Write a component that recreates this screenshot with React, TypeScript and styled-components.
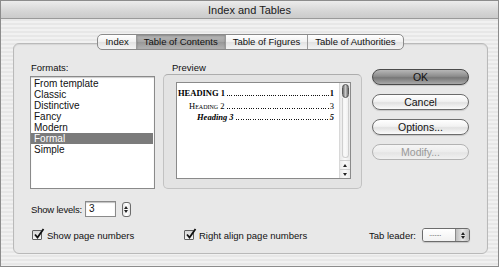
import React from 'react';
import styled, { createGlobalStyle, css } from 'styled-components';

const GlobalStyle = createGlobalStyle`
  html, body { margin: 0; padding: 0; background: #fff; }
  body {
    font-family: "Liberation Sans", Arial, sans-serif;
    font-size: 9.5px;
    color: #111;
  }
`;

const pinstripe = css`
  background: repeating-linear-gradient(
    to bottom,
    #f1f1f1 0px,
    #f1f1f1 2px,
    #e7e7e7 2px,
    #e7e7e7 4px
  );
`;

const Window = styled.div`
  width: 499px;
  height: 267px;
  box-sizing: border-box;
  border: 1px solid #8c8c8c;
  display: flex;
  flex-direction: column;
  ${pinstripe}
`;

const TitleBar = styled.div`
  height: 17px;
  flex: none;
  display: flex;
  align-items: center;
  justify-content: center;
  font-size: 11px;
  color: #1a1a1a;
  background: linear-gradient(to bottom, #ececec, #d6d6d6 60%, #cbcbcb);
  border-bottom: 1px solid #9a9a9a;
`;

const Body = styled.div`
  display: flex;
  flex-direction: column;
  padding: 15px 10px 0 12px;
`;

const TabStrip = styled.div`
  align-self: center;
  display: flex;
  height: 14px;
  margin-bottom: -7px;
  position: relative;
  z-index: 1;
  border: 1px solid #8a8a8a;
  border-radius: 5px;
  overflow: hidden;
  background: linear-gradient(to bottom, #ffffff, #f0f0f0 50%, #e2e2e2 51%, #f4f4f4);
`;

const Tab = styled.div<{ $active?: boolean }>`
  display: flex;
  align-items: center;
  padding: 0 7px;
  line-height: 14px;
  color: #111;
  & + & { border-left: 1px solid #9a9a9a; }
  ${(p) =>
    p.$active &&
    css`
      background: linear-gradient(to bottom, #b9b9b9, #a5a5a5 50%, #979797 51%, #b3b3b3);
      box-shadow: inset 0 1px 2px rgba(0, 0, 0, 0.25);
    `}
`;

const GroupBox = styled.div`
  height: 211px;
  box-sizing: border-box;
  border: 1px solid #b9b9b9;
  border-radius: 6px;
  background: #e8e8e8;
  box-shadow: inset 0 1px 1px rgba(0, 0, 0, 0.08);
  padding: 18px 18px 0 16px;
  display: flex;
  flex-direction: column;
`;

const MainRow = styled.div`
  display: flex;
  height: 127px;
`;

const FormatsCol = styled.div`
  width: 125px;
  flex: none;
  display: flex;
  flex-direction: column;
`;

const FieldLabel = styled.div<{ $pad?: number }>`
  height: 12px;
  line-height: 12px;
  padding-left: ${(p) => p.$pad ?? 1}px;
`;

const ListBox = styled.div`
  margin-top: 2px;
  height: 113px;
  box-sizing: border-box;
  border: 1px solid #8a8a8a;
  background: #fff;
  box-shadow: inset 0 1px 1px rgba(0, 0, 0, 0.2);
  padding: 1px 1px 0 0;
`;

const ListItem = styled.div<{ $selected?: boolean }>`
  height: 11px;
  line-height: 11px;
  padding-left: 3px;
  font-size: 10px;
  ${(p) =>
    p.$selected &&
    css`
      background: #7b7b7b;
      color: #fff;
    `}
`;

const PreviewCol = styled.div`
  width: 199px;
  flex: none;
  margin-left: 8px;
  display: flex;
  flex-direction: column;
`;

const PreviewFrame = styled.div`
  height: 115px;
  box-sizing: border-box;
  border: 1px solid #c2c2c2;
  border-top-color: #adadad;
  border-radius: 5px;
  background: #e3e3e3;
  padding: 7px 10px 9px 12px;
  display: flex;
`;

const PreviewPaper = styled.div`
  flex: 1;
  min-width: 0;
  overflow: hidden;
  display: flex;
  border: 1px solid #8a8a8a;
  background: #fff;
`;

const PreviewLines = styled.div`
  flex: 1;
  min-width: 0;
  padding: 5px 5px 0 1px;
  font-family: "Liberation Serif", "Times New Roman", serif;
  font-size: 8.5px;
  color: #000;
`;

const TocRow = styled.div<{ $indent: number; $gap: number }>`
  display: flex;
  align-items: baseline;
  margin-top: ${(p) => p.$gap}px;
  padding-left: ${(p) => p.$indent}px;
  line-height: 11px;
  white-space: nowrap;
`;

const TocLevel = styled.div<{ $level: 1 | 2 | 3 }>`
  display: flex;
  flex: 1;
  min-width: 0;
  ${(p) => p.$level === 1 && css`font-weight: bold;`}
  ${(p) => p.$level === 2 && css`font-variant: small-caps;`}
  ${(p) => p.$level === 3 && css`font-style: italic; font-weight: 600;`}
`;

/* dotted tab leader drawn as a repeating pattern on the baseline */
const Leader = styled.span<{ $bold?: boolean }>`
  flex: 1;
  min-width: 0;
  align-self: flex-end;
  height: ${(p) => (p.$bold ? 1.5 : 1)}px;
  margin: 0 1px 3px 2px;
  background-image: repeating-linear-gradient(
    to right,
    #111 0px,
    #111 1px,
    transparent 1px,
    transparent ${(p) => (p.$bold ? 2.2 : 2.4)}px
  );
`;

const Scrollbar = styled.div`
  width: 10px;
  flex: none;
  border-left: 1px solid #d8d8d8;
  background: linear-gradient(to right, #e9e9e9, #fafafa 50%, #e9e9e9);
  display: flex;
  flex-direction: column;
  align-items: center;
  padding-top: 1px;
`;

const ScrollThumb = styled.div`
  width: 7px;
  height: 14px;
  border: 1px solid #555;
  border-radius: 4px;
  box-sizing: border-box;
  background: linear-gradient(to right, #6f6f6f, #c9c9c9 50%, #6f6f6f);
`;

const ScrollTrack = styled.div`
  flex: 1;
  width: 7px;
  box-sizing: border-box;
  border-radius: 0 0 4px 4px;
  border: 1px solid #cfcfcf;
  border-top: none;
  margin-bottom: 2px;
`;

const ScrollArrow = styled.div`
  height: 8px;
  width: 100%;
  display: flex;
  align-items: center;
  justify-content: center;
  border-top: 1px solid #cfcfcf;
`;

const ButtonCol = styled.div`
  width: 97px;
  flex: none;
  margin-left: 10px;
  margin-top: 7px;
  display: flex;
  flex-direction: column;
  gap: 9px;
`;

const PushButton = styled.div<{ $variant?: 'default' | 'disabled' }>`
  height: 16px;
  box-sizing: border-box;
  border-radius: 8px;
  border: 1px solid #6c6c6c;
  display: flex;
  align-items: center;
  justify-content: center;
  font-size: 10.5px;
  color: #111;
  background: linear-gradient(to bottom, #ffffff, #f2f2f2 45%, #e1e1e1 55%, #fbfbfb);
  box-shadow: 0 1px 1px rgba(0, 0, 0, 0.15);
  ${(p) =>
    p.$variant === 'default' &&
    css`
      border-color: #4a4a4a;
      background: linear-gradient(to bottom, #b7b7b7, #8d8d8d 45%, #777 55%, #a9a9a9);
    `}
  ${(p) =>
    p.$variant === 'disabled' &&
    css`
      border-color: #b3b3b3;
      color: #9a9a9a;
      box-shadow: none;
      background: linear-gradient(to bottom, #f6f6f6, #ececec 50%, #e4e4e4 55%, #f1f1f1);
    `}
`;

const LevelsRow = styled.div`
  display: flex;
  align-items: center;
  height: 16px;
  margin-top: 12px;
  padding-left: 1px;
  letter-spacing: -0.2px;
`;

const LevelInput = styled.div`
  width: 31px;
  height: 16px;
  box-sizing: border-box;
  margin-left: 3px;
  border: 1px solid #8a8a8a;
  background: #fff;
  box-shadow: inset 0 1px 1px rgba(0, 0, 0, 0.25);
  padding-left: 3px;
  line-height: 14px;
  font-size: 10px;
  letter-spacing: 0;
`;

const Stepper = styled.div`
  width: 9px;
  height: 15px;
  margin-left: 6px;
  box-sizing: border-box;
  border: 1px solid #6c6c6c;
  border-radius: 3px;
  background: linear-gradient(to right, #e6e6e6, #ffffff 50%, #e6e6e6);
  display: flex;
  flex-direction: column;
  align-items: center;
  justify-content: center;
  gap: 1px;
`;

const OptionsRow = styled.div`
  display: flex;
  align-items: center;
  height: 16px;
  margin-top: 10px;
`;

const CheckItem = styled.div<{ $width?: number }>`
  display: flex;
  align-items: center;
  gap: 5px;
  padding-left: 2px;
  width: ${(p) => (p.$width ? `${p.$width}px` : 'auto')};
`;

const CheckBox = styled.div`
  width: 10px;
  height: 10px;
  box-sizing: border-box;
  border: 1px solid #5e5e5e;
  border-radius: 1px;
  background: linear-gradient(to bottom, #d6d6d6, #f6f6f6);
  position: relative;
  svg { position: absolute; left: 0; top: -3px; }
`;

const LeaderField = styled.div`
  margin-left: auto;
  display: flex;
  align-items: center;
  gap: 6px;
  margin-right: -1px;
`;

const PopUp = styled.div`
  width: 48px;
  height: 14px;
  box-sizing: border-box;
  border: 1px solid #6c6c6c;
  border-radius: 3px;
  display: flex;
  overflow: hidden;
  box-shadow: 0 1px 1px rgba(0, 0, 0, 0.15);
`;

const PopUpValue = styled.div`
  flex: 1;
  background: linear-gradient(to bottom, #fff, #f1f1f1);
  font-size: 8px;
  line-height: 10px;
  padding-left: 6px;
  color: #555;
  letter-spacing: -0.5px;
`;

const PopUpArrows = styled.div`
  width: 13px;
  border-left: 1px solid #8a8a8a;
  background: linear-gradient(to right, #bdbdbd, #e6e6e6 50%, #bdbdbd);
  display: flex;
  flex-direction: column;
  align-items: center;
  justify-content: center;
  gap: 1px;
`;

const Arrow = ({ dir, size = 4 }: { dir: 'up' | 'down'; size?: number }) => (
  <svg width={size} height={size - 1} viewBox="0 0 4 3">
    <path d={dir === 'up' ? 'M2 0 L4 3 L0 3 Z' : 'M0 0 L4 0 L2 3 Z'} fill="#222" />
  </svg>
);

const Check = () => (
  <svg width="12" height="12" viewBox="0 0 12 12">
    <path d="M2 6.5 L4.5 9.5 L10.5 1" stroke="#111" strokeWidth="1.8" fill="none" />
  </svg>
);

const formats = ['From template', 'Classic', 'Distinctive', 'Fancy', 'Modern', 'Formal', 'Simple'];

export default function App() {
  return (
    <>
      <GlobalStyle />
      <Window>
        <TitleBar>Index and Tables</TitleBar>
        <Body>
          <TabStrip>
            <Tab>Index</Tab>
            <Tab $active>Table of Contents</Tab>
            <Tab>Table of Figures</Tab>
            <Tab>Table of Authorities</Tab>
          </TabStrip>
          <GroupBox>
            <MainRow>
              <FormatsCol>
                <FieldLabel>Formats:</FieldLabel>
                <ListBox>
                  {formats.map((f) => (
                    <ListItem key={f} $selected={f === 'Formal'}>
                      {f}
                    </ListItem>
                  ))}
                </ListBox>
              </FormatsCol>
              <PreviewCol>
                <FieldLabel $pad={9}>Preview</FieldLabel>
                <PreviewFrame>
                  <PreviewPaper>
                    <PreviewLines>
                      <TocRow $indent={0} $gap={0}>
                        <TocLevel $level={1}>
                          HEADING 1<Leader $bold />1
                        </TocLevel>
                      </TocRow>
                      <TocRow $indent={11} $gap={2}>
                        <TocLevel $level={2}>
                          Heading 2<Leader />3
                        </TocLevel>
                      </TocRow>
                      <TocRow $indent={19} $gap={0}>
                        <TocLevel $level={3}>
                          Heading 3<Leader />5
                        </TocLevel>
                      </TocRow>
                    </PreviewLines>
                    <Scrollbar>
                      <ScrollThumb />
                      <ScrollTrack />
                      <ScrollArrow>
                        <Arrow dir="up" />
                      </ScrollArrow>
                      <ScrollArrow>
                        <Arrow dir="down" />
                      </ScrollArrow>
                    </Scrollbar>
                  </PreviewPaper>
                </PreviewFrame>
              </PreviewCol>
              <ButtonCol>
                <PushButton $variant="default">OK</PushButton>
                <PushButton>Cancel</PushButton>
                <PushButton>Options...</PushButton>
                <PushButton $variant="disabled">Modify...</PushButton>
              </ButtonCol>
            </MainRow>
            <LevelsRow>
              Show levels:
              <LevelInput>3</LevelInput>
              <Stepper>
                <Arrow dir="up" size={4} />
                <Arrow dir="down" size={4} />
              </Stepper>
            </LevelsRow>
            <OptionsRow>
              <CheckItem $width={150}>
                <CheckBox>
                  <Check />
                </CheckBox>
                Show page numbers
              </CheckItem>
              <CheckItem>
                <CheckBox>
                  <Check />
                </CheckBox>
                Right align page numbers
              </CheckItem>
              <LeaderField>
                Tab leader:
                <PopUp>
                  <PopUpValue>.......</PopUpValue>
                  <PopUpArrows>
                    <Arrow dir="up" />
                    <Arrow dir="down" />
                  </PopUpArrows>
                </PopUp>
              </LeaderField>
            </OptionsRow>
          </GroupBox>
        </Body>
      </Window>
    </>
  );
}
